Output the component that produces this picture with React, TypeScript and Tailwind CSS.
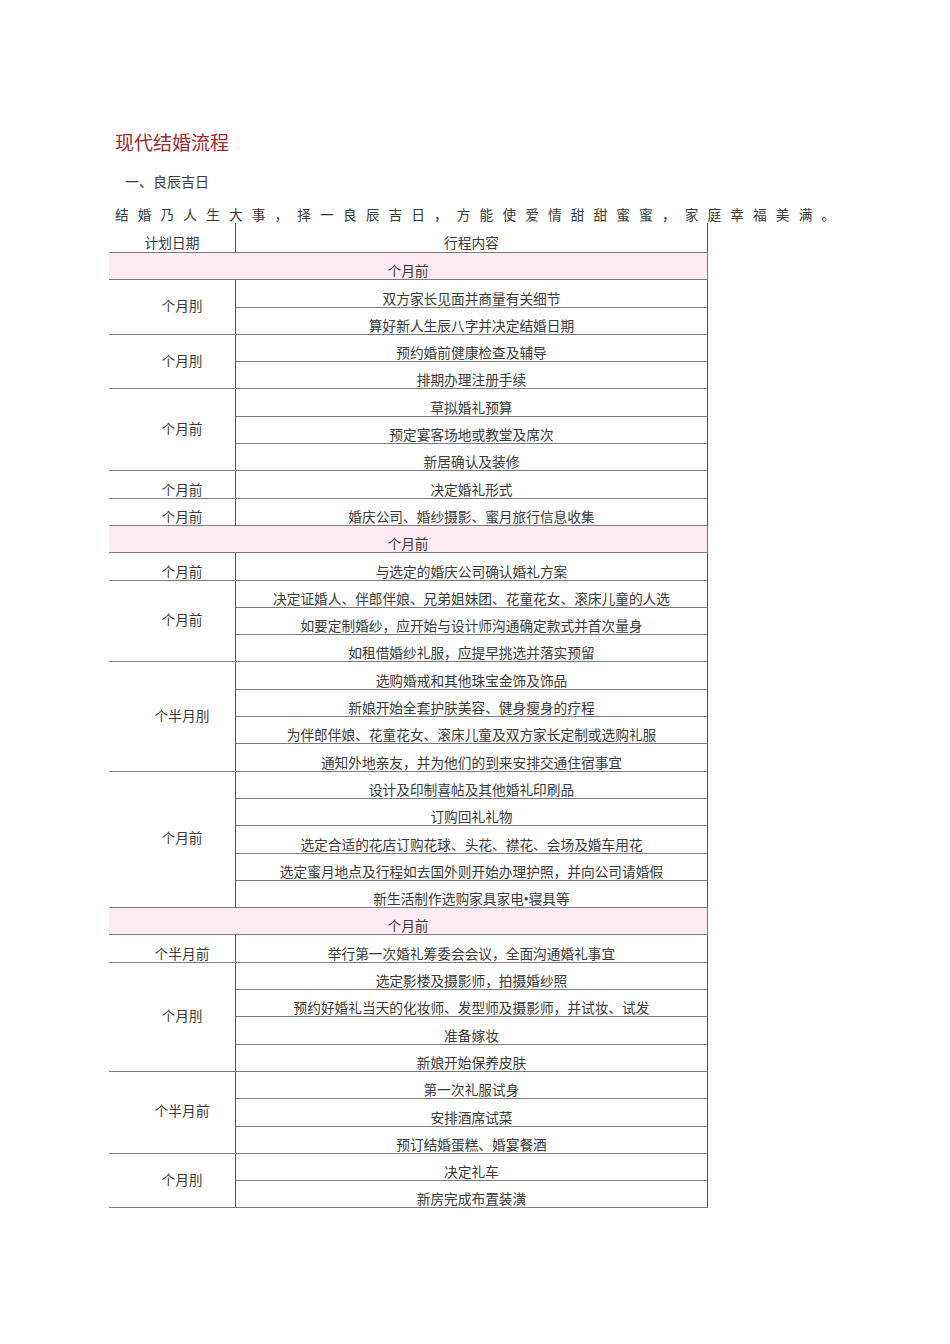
type Row =
    | { kind: 'band'; text: string }
    | { kind: 'group'; label: string; items: string[] };

const rows: Row[] = [
    { kind: 'band', text: '个月前' },
    { kind: 'group', label: '个月刖', items: ['双方家长见面并商量有关细节', '算好新人生辰八字并决定结婚日期'] },
    { kind: 'group', label: '个月刖', items: ['预约婚前健康检查及辅导', '排期办理注册手续'] },
    { kind: 'group', label: '个月前', items: ['草拟婚礼预算', '预定宴客场地或教堂及席次', '新居确认及装修'] },
    { kind: 'group', label: '个月前', items: ['决定婚礼形式'] },
    { kind: 'group', label: '个月前', items: ['婚庆公司、婚纱摄影、蜜月旅行信息收集'] },
    { kind: 'band', text: '个月前' },
    { kind: 'group', label: '个月前', items: ['与选定的婚庆公司确认婚礼方案'] },
    {
        kind: 'group',
        label: '个月前',
        items: [
            '决定证婚人、伴郎伴娘、兄弟姐妹团、花童花女、滚床儿童的人选',
            '如要定制婚纱，应开始与设计师沟通确定款式并首次量身',
            '如租借婚纱礼服，应提早挑选并落实预留',
        ],
    },
    {
        kind: 'group',
        label: '个半月刖',
        items: [
            '选购婚戒和其他珠宝金饰及饰品',
            '新娘开始全套护肤美容、健身瘦身的疗程',
            '为伴郎伴娘、花童花女、滚床儿童及双方家长定制或选购礼服',
            '通知外地亲友，并为他们的到来安排交通住宿事宜',
        ],
    },
    {
        kind: 'group',
        label: '个月前',
        items: [
            '设计及印制喜帖及其他婚礼印刷品',
            '订购回礼礼物',
            '选定合适的花店订购花球、头花、襟花、会场及婚车用花',
            '选定蜜月地点及行程如去国外则开始办理护照，并向公司请婚假',
            '新生活制作选购家具家电•寝具等',
        ],
    },
    { kind: 'band', text: '个月前' },
    { kind: 'group', label: '个半月前', items: ['举行第一次婚礼筹委会会议，全面沟通婚礼事宜'] },
    {
        kind: 'group',
        label: '个月刖',
        items: [
            '选定影楼及摄影师，拍摄婚纱照',
            '预约好婚礼当天的化妆师、发型师及摄影师，并试妆、试发',
            '准备嫁妆',
            '新娘开始保养皮肤',
        ],
    },
    { kind: 'group', label: '个半月前', items: ['第一次礼服试身', '安排酒席试菜', '预订结婚蛋糕、婚宴餐酒'] },
    { kind: 'group', label: '个月刖', items: ['决定礼车', '新房完成布置装潢'] },
];

export default function App() {
    return (
        <div className="min-h-[1344px] bg-white pt-[132px] font-['Liberation_Serif','Noto_Sans_CJK_SC',serif] text-[#3a3a3a]">
            <div className="ml-[109px]">
                <h1 className="pl-[6px] text-[19px] leading-[24px] text-[#9e2a2f]">现代结婚流程</h1>
                <p className="mt-[17px] pl-[16px] text-[14px] leading-[20px]">一、良辰吉日</p>
                <p className="mt-[16px] whitespace-nowrap pl-[6px] text-[13.7px] leading-[14px] tracking-[9.1px]">
                    结婚乃人生大事，择一良辰吉日，方能使爱情甜甜蜜蜜，家庭幸福美满。
                </p>

                {/* 表格 */}
                <div className="w-[599px] text-[13.7px] leading-[14px]">
                    <div className="flex h-[30px] border-b border-[#7a7a7a]">
                        <div className="flex w-[127px] items-end justify-center border-r border-[#555] pb-[1px]">计划日期</div>
                        <div className="flex flex-1 items-end justify-center border-r border-[#555] pb-[1px]">行程内容</div>
                    </div>
                    {rows.map((row, i) =>
                        row.kind === 'band' ? (
                            <div
                                key={i}
                                className="flex h-[27.3px] items-end justify-center border-r border-b border-[#7a7a7a] bg-[#fdeaf3]"
                            >
                                {row.text}
                            </div>
                        ) : (
                            <div key={i} className="flex">
                                <div
                                    className={
                                        row.items.length === 1
                                            ? 'flex w-[127px] items-end justify-center border-r border-b border-r-[#555] border-b-[#7a7a7a] pl-5'
                                            : 'flex w-[127px] items-center justify-center border-r border-b border-r-[#555] border-b-[#7a7a7a] pl-5'
                                    }
                                >
                                    {row.label}
                                </div>
                                <div className="flex flex-1 flex-col border-r border-[#555]">
                                    {row.items.map((item, j) => (
                                        <div
                                            key={j}
                                            className="flex h-[27.3px] items-end justify-center whitespace-nowrap border-b border-[#7a7a7a]"
                                        >
                                            {item}
                                        </div>
                                    ))}
                                </div>
                            </div>
                        )
                    )}
                </div>
            </div>
        </div>
    );
}
